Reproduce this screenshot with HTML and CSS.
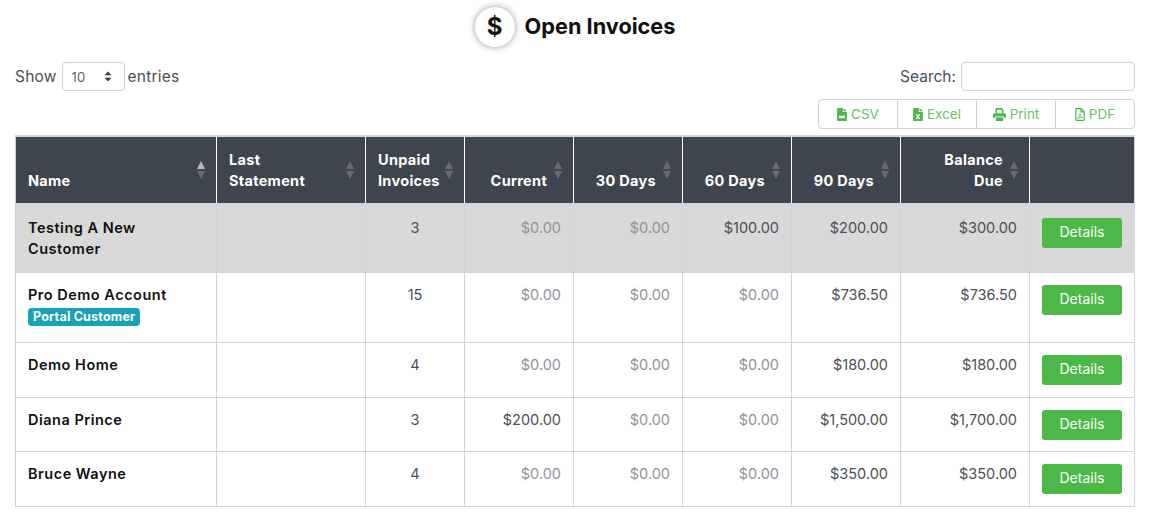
FILE: index.html
```html
<!DOCTYPE html>
<html lang="en">

<head>
  <meta charset="UTF-8">
  <meta name="viewport" content="width=device-width, initial-scale=1.0">
  <title>Open Invoices</title>
  <link rel="stylesheet" href="styles.css">
</head>

<body>
  <main class="page">
    <header class="title">
      <span class="title__icon">$</span>
      <h1 class="title__text">Open Invoices</h1>
    </header>

    <div class="controls">
      <label class="length">
        Show
        <span class="length__box">
          <select class="length__select">
            <option>10</option>
            <option>25</option>
            <option>50</option>
          </select>
          <svg class="length__arrows" viewBox="0 0 10 14">
            <path d="M5 0.5 9.5 5.5H0.5Z" />
            <path d="M5 13.5 0.5 8.5H9.5Z" />
          </svg>
        </span>
        entries
      </label>
      <div class="tools">
        <label class="search">Search: <input class="search__input" type="search"></label>
        <div class="exports">
          <button class="exports__btn">
            <svg class="exports__icon" viewBox="0 0 12 16">
              <path d="M0 1.2C0 .5.5 0 1.2 0H7v4.2c0 .4.4.8.8.8H12v9.8c0 .7-.5 1.2-1.2 1.2H1.2C.5 16 0 15.500 0 14.800Z" />
              <path d="M8 0 12 4H8Z" />
              <rect class="exports__cut" x="2.500" y="9.500" width="7" height="3" />
            </svg>
            CSV
          </button>
          <button class="exports__btn">
            <svg class="exports__icon" viewBox="0 0 12 16">
              <path d="M0 1.2C0 .5.5 0 1.2 0H7v4.2c0 .4.4.8.8.8H12v9.8c0 .7-.5 1.2-1.2 1.2H1.2C.5 16 0 15.500 0 14.800Z" />
              <path d="M8 0 12 4H8Z" />
              <path class="exports__cut-line" d="M3.800 7.500 8.200 13.500M8.200 7.500 3.800 13.500" />
            </svg>
            Excel
          </button>
          <button class="exports__btn">
            <svg class="exports__icon exports__icon--wide" viewBox="0 0 16 16">
              <path d="M3 1.200C3 .5 3.500 0 4.200 0H11l2 2v4h-2V2.500L10 2H5v4H3Z" />
              <path d="M2 6.500h12c1.100 0 2 .9 2 2V12h-2.500v-1.500h-11V12H0V8.500c0-1.100.9-2 2-2Z" />
              <path d="M3.500 11.500h9V16h-9Z" />
            </svg>
            Print
          </button>
          <button class="exports__btn">
            <svg class="exports__icon" viewBox="0 0 12 16">
              <path class="exports__outline" d="M.8 1.800C.8 1.200 1.200.8 1.800.8H7.500L11.200 4.500V14.200C11.200 14.800 10.800 15.200 10.200 15.200H1.800C1.200 15.200.8 14.800.8 14.200Z" />
              <path class="exports__outline" d="M7.300.8V4.700H11.200" />
              <path class="exports__outline exports__outline--thin" d="M6 7C5.500 9 4.500 11.500 3 13C4.500 12 7 11.300 9 11.500C7.500 10.500 6.500 9 6 7Z" />
            </svg>
            PDF
          </button>
        </div>
      </div>
    </div>

    <table class="invoices">
      <colgroup>
        <col class="col-name">
        <col class="col-statement">
        <col class="col-unpaid">
        <col class="col-money">
        <col class="col-money">
        <col class="col-money">
        <col class="col-money">
        <col class="col-balance">
        <col class="col-action">
      </colgroup>
      <thead>
        <tr>
          <th class="sort sort--active">Name</th>
          <th class="sort">Last<br>Statement</th>
          <th class="sort">Unpaid<br>Invoices</th>
          <th class="sort num">Current</th>
          <th class="sort num">30 Days</th>
          <th class="sort num">60 Days</th>
          <th class="sort num">90 Days</th>
          <th class="sort num">Balance<br>Due</th>
          <th></th>
        </tr>
      </thead>
      <tbody>
        <tr class="row row--selected">
          <td class="name">Testing A New Customer</td>
          <td></td>
          <td class="count">3</td>
          <td class="num zero">$0.00</td>
          <td class="num zero">$0.00</td>
          <td class="num">$100.00</td>
          <td class="num">$200.00</td>
          <td class="num">$300.00</td>
          <td class="action"><button class="details">Details</button></td>
        </tr>
        <tr class="row row--badge">
          <td class="name">Pro Demo Account<br><span class="badge">Portal Customer</span></td>
          <td></td>
          <td class="count">15</td>
          <td class="num zero">$0.00</td>
          <td class="num zero">$0.00</td>
          <td class="num zero">$0.00</td>
          <td class="num">$736.50</td>
          <td class="num">$736.50</td>
          <td class="action"><button class="details">Details</button></td>
        </tr>
        <tr class="row">
          <td class="name">Demo Home</td>
          <td></td>
          <td class="count">4</td>
          <td class="num zero">$0.00</td>
          <td class="num zero">$0.00</td>
          <td class="num zero">$0.00</td>
          <td class="num">$180.00</td>
          <td class="num">$180.00</td>
          <td class="action"><button class="details">Details</button></td>
        </tr>
        <tr class="row row--short">
          <td class="name">Diana Prince</td>
          <td></td>
          <td class="count">3</td>
          <td class="num">$200.00</td>
          <td class="num zero">$0.00</td>
          <td class="num zero">$0.00</td>
          <td class="num">$1,500.00</td>
          <td class="num">$1,700.00</td>
          <td class="action"><button class="details">Details</button></td>
        </tr>
        <tr class="row">
          <td class="name">Bruce Wayne</td>
          <td></td>
          <td class="count">4</td>
          <td class="num zero">$0.00</td>
          <td class="num zero">$0.00</td>
          <td class="num zero">$0.00</td>
          <td class="num">$350.00</td>
          <td class="num">$350.00</td>
          <td class="action"><button class="details">Details</button></td>
        </tr>
      </tbody>
    </table>
  </main>
</body>

</html>
```

FILE: styles.css
```css
* {
  box-sizing: border-box;
}

body {
  margin: 0;
  background-color: #fff;
  color: #4b4f56;
  font-family: "Inter", "Liberation Sans", sans-serif;
  font-size: 14.5px;
  line-height: 21px;
}

.page {
  padding: 6px 16px 0 15px;
}

.title {
  display: flex;
  justify-content: center;
  align-items: center;
  gap: 10px;
  height: 41px;
  margin-bottom: 15px;
}

.title__icon {
  display: flex;
  justify-content: center;
  align-items: center;
  width: 40px;
  height: 40px;
  border-radius: 50%;
  background-color: #fff;
  box-shadow: 0 0 7px rgba(0, 0, 0, 0.4);
  color: #111;
  font-size: 24px;
  font-weight: 700;
}

.title__text {
  margin: 0;
  color: #111;
  font-size: 21.7px;
  font-weight: 700;
}

.controls {
  display: flex;
  justify-content: space-between;
  align-items: flex-start;
  margin-bottom: 6px;
  font-size: 15.5px;
}

.length {
  display: flex;
  align-items: center;
  gap: 4px;
  letter-spacing: 0.2px;
  line-height: 27px;
}

.length__box {
  position: relative;
  display: block;
  margin-left: 1px;
  margin-right: -1px;
}

.length__select {
  display: block;
  width: 63px;
  height: 29px;
  padding: 0 9px;
  border: 1px solid #ced4da;
  border-radius: 4px;
  appearance: none;
  background-color: #fff;
  color: #5a6270;
  font-family: inherit;
  font-size: 13px;
}

.length__arrows {
  position: absolute;
  top: 9px;
  right: 13px;
  width: 8px;
  height: 11px;
  fill: #3a3f47;
  pointer-events: none;
}

.tools {
  display: flex;
  flex-direction: column;
  align-items: flex-end;
  gap: 8px;
}

.search {
  display: flex;
  align-items: center;
  gap: 5px;
}

.search__input {
  width: 174px;
  height: 29px;
  border: 1px solid #ced4da;
  border-radius: 4px;
}

.exports {
  display: flex;
}

.exports__btn {
  display: flex;
  justify-content: center;
  align-items: center;
  gap: 4px;
  width: 80px;
  height: 30px;
  margin-left: -1px;
  padding: 0;
  border: 1px solid #ced4da;
  background-color: #fff;
  color: #6cbf68;
  font-family: inherit;
  font-size: 13.5px;
}

.exports__btn:first-child {
  margin-left: 0;
  border-radius: 4px 0 0 4px;
}

.exports__btn:last-child {
  border-radius: 0 4px 4px 0;
}

.exports__icon {
  width: 10px;
  height: 13px;
  fill: #4cb848;
}

.exports__icon--wide {
  width: 13px;
}

.exports__cut {
  fill: #fff;
}

.exports__cut-line {
  fill: none;
  stroke: #fff;
  stroke-width: 1.500;
}

.exports__outline {
  fill: none;
  stroke: #4cb848;
  stroke-width: 1.500;
}

.exports__outline--thin {
  stroke-width: 1;
}

.invoices {
  width: 1120px;
  border-collapse: collapse;
  table-layout: fixed;
}

.col-name { width: 201px; }
.col-statement { width: 149px; }
.col-unpaid { width: 99px; }
.col-money { width: 109px; }
.col-balance { width: 129px; }
.col-action { width: 105px; }

.invoices th {
  position: relative;
  height: 68px;
  padding: 0 26px 12px 12px;
  border: 1px solid #fff;
  border-top: 2px solid #d6d9df;
  border-bottom: 3px solid #d0d4db;
  background-color: #3f454e;
  color: #fff;
  font-weight: 700;
  letter-spacing: 0.3px;
  text-align: left;
  vertical-align: bottom;
}

.invoices th:first-child {
  border-left-color: #d0d4db;
}

.invoices th:last-child {
  border-right-color: #d0d4db;
}

.invoices th.num {
  text-align: right;
}

/* sort arrows sit over the header cell */
.sort::before,
.sort::after {
  content: "";
  position: absolute;
  right: 11px;
  border-left: 4.500px solid transparent;
  border-right: 4.500px solid transparent;
  opacity: 0.5;
}

.sort::before {
  top: 24px;
  border-bottom: 8px solid #8b9098;
}

.sort::after {
  top: 34px;
  border-top: 8px solid #8b9098;
}

.sort--active::before {
  border-bottom-color: #d4d6da;
  opacity: 0.8;
}

.invoices td {
  padding: 11px 12px 0;
  border: 1px solid #d0d4db;
  vertical-align: top;
}

.row {
  height: 55px;
}

.row--short {
  height: 54px;
}

.row--selected {
  height: 68px;
  background-color: #d9d9d9;
}

.row--badge {
  height: 70px;
}

.invoices .name {
  color: #111;
  font-weight: 600;
  letter-spacing: 0.5px;
}

.invoices .count {
  text-align: center;
}

.invoices .num {
  text-align: right;
}

.invoices .zero {
  color: #8e939b;
}

.invoices .action {
  padding-top: 12px;
}

.badge {
  display: inline-block;
  margin-top: 3px;
  padding: 0 5px;
  border-radius: 4px;
  background-color: #17a2b8;
  color: #fff;
  font-size: 12.5px;
  font-weight: 700;
  letter-spacing: 0.2px;
  line-height: 18px;
  vertical-align: top;
}

.details {
  display: block;
  width: 80px;
  height: 30px;
  padding: 0 0 2px;
  border: 0;
  border-radius: 3px;
  background-color: #4cb848;
  color: #fff;
  font-family: inherit;
  font-size: 14px;
}
```
